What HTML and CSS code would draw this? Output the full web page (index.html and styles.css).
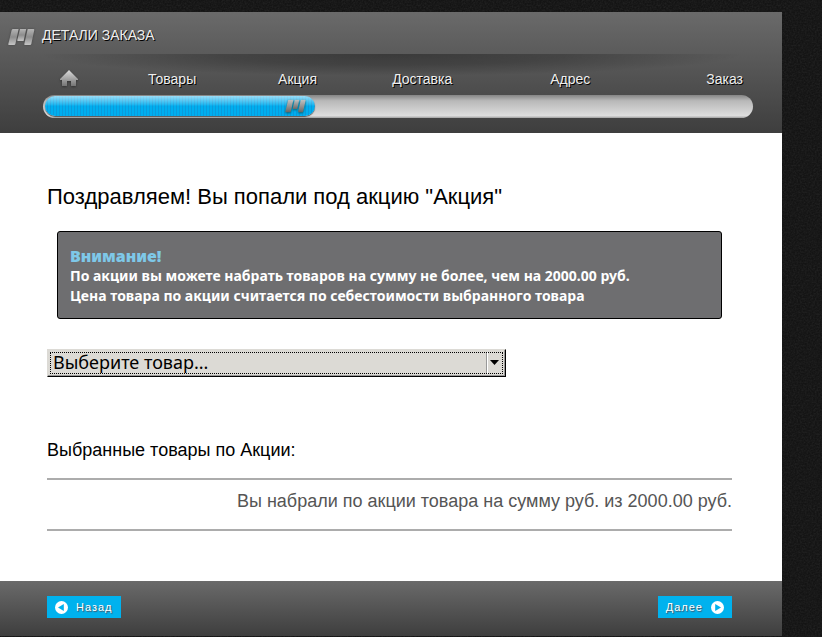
FILE: index.html
```html
<!DOCTYPE html>
<html lang="ru">
<head>
  <meta charset="UTF-8">
  <meta name="viewport" content="width=device-width, initial-scale=1.0">
  <title>Детали заказа</title>
  <link rel="stylesheet" href="styles.css">
</head>
<body>

  <div class="page">
    <header class="header">
      <div class="header-title">
        <svg class="logo" width="28" height="18" viewBox="0 0 28 18" aria-hidden="true">
          <defs>
            <linearGradient id="metal" x1="0" y1="0" x2="0" y2="1">
              <stop offset="0" stop-color="#b4b4b4"/>
              <stop offset="0.5" stop-color="#8c8c8c"/>
              <stop offset="1" stop-color="#c6c6c6"/>
            </linearGradient>
          </defs>
          <g fill="url(#metal)">
            <path d="M5 1h5.600L7.400 16q-.3 1-1.300 1H1q-1 0-.7-1L3.600 2.200Q4 1 5 1z"/>
            <path d="M12 1h6.200l-2.600 12H10q-1 0-.7-1z"/>
            <path d="M19.700 1H25.500q1 0 .8 1L23.300 16q-.3 1-1.300 1H17q-1 0-.7-1z"/>
          </g>
        </svg>
        <h1>ДЕТАЛИ ЗАКАЗА</h1>
      </div>

      <nav class="steps-nav" aria-label="Шаги заказа">
        <ul class="steps">
          <li>
            <a href="#home" aria-label="Главная">
              <svg class="home" width="18" height="18" viewBox="0 0 18 18" aria-hidden="true">
                <defs>
                  <linearGradient id="roof" x1="0" y1="0" x2="0" y2="1">
                    <stop offset="0" stop-color="#dcdcdc"/>
                    <stop offset="1" stop-color="#747474"/>
                  </linearGradient>
                </defs>
                <path fill="url(#roof)" d="M9 1l9 9v1h-2v6h-5v-5H7v5H2v-6H0v-1z"/>
              </svg>
            </a>
          </li>
          <li><a href="#goods">Товары</a></li>
          <li><a href="#promo" aria-current="step">Акция</a></li>
          <li><a href="#delivery">Доставка</a></li>
          <li><a href="#address">Адрес</a></li>
          <li><a href="#order">Заказ</a></li>
        </ul>
        <div class="progress" role="progressbar" aria-label="Оформление заказа" aria-valuenow="38" aria-valuemin="0" aria-valuemax="100">
          <div class="progress-fill" style="width: 38.2%">
            <svg class="progress-mark" width="22" height="14" viewBox="0 0 28 18" aria-hidden="true">
              <defs>
                <linearGradient id="mark" x1="0" y1="0" x2="0" y2="1">
                  <stop offset="0" stop-color="#c2c2c2"/>
                  <stop offset="1" stop-color="#686868"/>
                </linearGradient>
              </defs>
              <g fill="url(#mark)">
                <path d="M5 1h5.600L7.400 16q-.3 1-1.300 1H1q-1 0-.7-1L3.600 2.200Q4 1 5 1z"/>
                <path d="M12.500 1h5.700l-2.600 12H10.500q-1 0-.7-1z"/>
                <path d="M20.200 1H25.500q1 0 .8 1L23.300 16q-.3 1-1.300 1H17.500q-1 0-.7-1z"/>
              </g>
            </svg>
          </div>
        </div>
      </nav>
    </header>

    <main class="content">
      <h2>Поздравляем! Вы попали под акцию "Акция"</h2>

      <div class="notice">
        <strong class="notice-title">Внимание!</strong>
        <p>По акции вы можете набрать товаров на сумму не более, чем на 2000.00 руб.</p>
        <p>Цена товара по акции считается по себестоимости выбранного товара</p>
      </div>

      <select class="product" aria-label="Товар">
        <option>Выберите товар...</option>
      </select>

      <h3>Выбранные товары по Акции:</h3>
      <p class="total">Вы набрали по акции товара на сумму руб. из 2000.00 руб.</p>
    </main>

    <footer class="footer">
      <button type="button" class="btn">
        <svg width="13" height="13" viewBox="0 0 13 13" aria-hidden="true">
          <circle cx="6.500" cy="6.500" r="6.500" fill="#fff"/>
          <path d="M8.800 3v7L3 6.500z" fill="#00b2ee"/>
        </svg>
        Назад
      </button>
      <button type="button" class="btn">
        Далее
        <svg width="13" height="13" viewBox="0 0 13 13" aria-hidden="true">
          <circle cx="6.500" cy="6.500" r="6.500" fill="#fff"/>
          <path d="M4.200 3v7L10 6.500z" fill="#00b2ee"/>
        </svg>
      </button>
    </footer>
  </div>

</body>
</html>
```

FILE: styles.css
```css
* {
  margin: 0;
  padding: 0;
  box-sizing: border-box;
}

body {
  font-family: "Liberation Sans", Arial, sans-serif;
  color: #000;
  background-color: #141414;
  background-image: url("data:image/svg+xml,%3Csvg xmlns='http://www.w3.org/2000/svg' width='120' height='120'%3E%3Cfilter id='n'%3E%3CfeTurbulence type='fractalNoise' baseFrequency='.6' numOctaves='2' stitchTiles='stitch'/%3E%3CfeColorMatrix values='0 0 0 0 .5 0 0 0 0 .5 0 0 0 0 .5 .15 0 0 0 -.05'/%3E%3C/filter%3E%3Crect width='120' height='120' filter='url(%23n)'/%3E%3C/svg%3E");
}

.page {
  margin: 12px 40px 1px 0;
  background: #fff;
}

/* header */
.header {
  background: linear-gradient(#6a6a6a, #3e3e3e);
}

.header-title {
  display: flex;
  align-items: flex-end;
  gap: 6px;
  height: 42px;
  padding: 0 8px 8px;
}

.logo {
  filter: drop-shadow(0 0 1px #444);
}

h1 {
  font-size: 14px;
  line-height: 22px;
  font-weight: normal;
  color: #eee;
  text-shadow: 1px 1px #000;
}

.steps-nav {
  padding: 15px 29px 15px 43px;
  background: radial-gradient(ellipse 45% 22px at 50% 0, rgba(0, 0, 0, 0.36), rgba(0, 0, 0, 0.24) 50%, transparent) no-repeat;
}

.steps {
  display: grid;
  grid-template-columns: 88fr 130fr 114fr 158fr 156fr auto;
  padding: 0 10px 0 17px;
  list-style: none;
}

.steps a {
  display: block;
  height: 26px;
  font-size: 14px;
  line-height: 20px;
  color: #eee;
  text-decoration: none;
  text-shadow: 1px 1px #000;
}

.home {
  display: block;
  filter: drop-shadow(0 1px 1px #333);
}

.progress {
  height: 23px;
  padding: 1px 2px;
  border-radius: 12px;
  background: linear-gradient(#858585, #b8b8b8 25%, #dedede 90%, #a0a0a0);
}

.progress-fill {
  display: flex;
  align-items: center;
  justify-content: flex-end;
  height: 20px;
  padding-right: 8px;
  border-radius: 10px;
  background:
    linear-gradient(rgba(255, 255, 255, 0.6), rgba(255, 255, 255, 0.1) 45%, transparent 50%),
    repeating-linear-gradient(90deg, #00aeef 0 2px, #0a9bdc 2px 3px);
  box-shadow: 0 1px 1px #555;
}

.progress-mark {
  filter: drop-shadow(0 1px 1px #067);
}

/* content */
.content {
  padding: 50px 50px 50px 47px;
}

h2 {
  font-size: 22px;
  line-height: 28px;
  font-weight: normal;
}

.notice {
  margin: 20px 10px 30px;
  padding: 14px 12px 12px;
  border: 1px solid #000;
  border-radius: 3px;
  background: #6e6e70;
  color: #fff;
  font-family: "Noto Sans", "Open Sans", sans-serif;
  font-size: 14px;
  line-height: 20px;
  font-weight: bold;
}

.notice-title {
  display: block;
  font-size: 16px;
  color: #7ec8e8;
}

.product {
  display: block;
  width: 67%;
  height: 28px;
  padding: 0 24px 2px 5px;
  appearance: none;
  border: 1px solid;
  border-color: #dcdad5 #000 #000 #dcdad5;
  border-radius: 0;
  outline: 1px dotted #000;
  outline-offset: -4px;
  background:
    url("data:image/svg+xml,%3Csvg xmlns='http://www.w3.org/2000/svg' width='19' height='22'%3E%3Cpath d='M0 0h1v22H0z' fill='%23999'/%3E%3Cpath d='M1 0h1v22H1z' fill='%23fff'/%3E%3Cpath d='M4 8h9l-4.500 5z'/%3E%3C/svg%3E") right 0 center no-repeat #dcdad5;
  box-shadow: inset -1px -1px #999;
  color: #000;
  font-family: "Noto Sans", "Open Sans", sans-serif;
  font-size: 18px;
}

h3 {
  margin-top: 60px;
  font-size: 18px;
  line-height: 26px;
  font-weight: normal;
}

.total {
  margin-top: 15px;
  padding: 8px 0 15px;
  border-top: 2px solid #acacac;
  border-bottom: 2px solid #acacac;
  font-size: 18px;
  line-height: 26px;
  text-align: right;
  color: #555;
}

/* footer */
.footer {
  display: flex;
  justify-content: space-between;
  padding: 15px 50px 18px 47px;
  background: linear-gradient(#6a6a6a, #3e3e3e);
}

.btn {
  display: flex;
  align-items: center;
  gap: 8px;
  height: 22px;
  padding: 0 8px;
  border: 0;
  background: #00b2ee;
  color: #fff;
  font-family: inherit;
  font-size: 11px;
  letter-spacing: 1px;
  text-shadow: 1px 1px 1px #456;
  cursor: pointer;
}
```
